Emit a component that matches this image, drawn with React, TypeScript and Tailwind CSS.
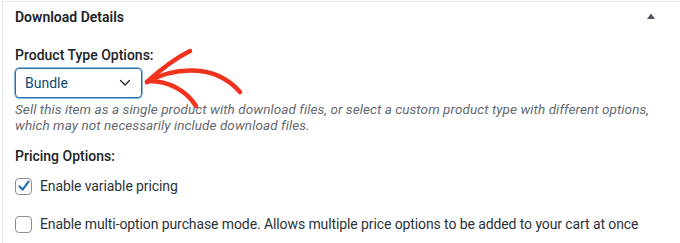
import React from "react";

// ── Pannello "Download Details" ─────────────────────────────────────────────

const font = "font-['Roboto','Liberation_Sans',sans-serif]";

function Checkbox({ checked }: { checked?: boolean }) {
  return (
    <span className="relative flex h-[17px] w-[17px] shrink-0 items-center justify-center rounded-[4px] border border-[#8c8f94] bg-white">
      {checked && (
        <svg width="16" height="16" viewBox="0 0 16 16" className="absolute">
          <path d="M3.6 8.4 L6.6 11.6 L12.6 3.6" fill="none" stroke="#2271b1" strokeWidth="2.2" strokeLinecap="round" strokeLinejoin="round" />
        </svg>
      )}
    </span>
  );
}

function RedArrow() {
  return (
    <svg className="pointer-events-none absolute left-0 top-0" width="680" height="243" viewBox="0 0 680 243">
      <g fill="none" stroke="#f1321d" strokeWidth="4.5" strokeLinecap="round" strokeLinejoin="round">
        <path d="M147 82 C 160 70, 176 58, 190 51" />
        <path d="M147 82 C 172 68, 214 62, 240 92" />
        <path d="M149 81 C 168 81, 186 90, 196 106" />
      </g>
    </svg>
  );
}

export default function App() {
  return (
    <div className={`relative h-[243px] w-[680px] overflow-hidden bg-white pl-[2px] pt-[1px] ${font}`}>
      <div className="h-full border-l border-t border-[#e2e4e7]">
        {/* Header */}
        <div className="flex items-center justify-between px-[12px] pt-[5px]">
          <h2 className="text-[14px] font-semibold leading-[20px] text-[#1d2327]">Download Details</h2>
          <svg width="10" height="8" viewBox="0 0 10 8" className="mr-[12px] mt-[-2px]">
            <path d="M1 7 L5 1.5 L9 7 Z" fill="#50575e" />
          </svg>
        </div>

        {/* Body */}
        <div className="whitespace-nowrap px-[12px] pt-[18px]">
          <p className="text-[14px] font-medium leading-[20px] text-[#1d2327]">Product Type Options:</p>

          <div className="mt-[3px] flex h-[30px] w-[127px] items-center justify-between rounded-[4px] border border-[#2271b1] pl-[9px] pr-[10px] shadow-[0_0_0_0.5px_#2271b1]">
            <span className="text-[14px] leading-[20px] text-[#0a4b78]">Bundle</span>
            <svg width="12" height="8" viewBox="0 0 12 8">
              <path d="M1.5 1.5 L6 6 L10.5 1.5" fill="none" stroke="#1d2327" strokeWidth="1.3" strokeLinecap="round" strokeLinejoin="round" />
            </svg>
          </div>

          <p className="mt-[3px] text-[13.5px] italic leading-[16px] tracking-[0.08px] text-[#646970]">
            Sell this item as a single product with download files, or select a custom product type with different options,
            <br />
            which may not necessarily include download files.
          </p>

          <p className="mt-[13px] text-[14px] font-medium leading-[20px] text-[#1d2327]">Pricing Options:</p>

          <label className="mt-[10px] flex items-center gap-[8px] text-[14px] leading-[20px] tracking-[-0.1px] text-[#2c3338]">
            <Checkbox checked />
            <span>Enable variable pricing</span>
          </label>

          <label className="mt-[18px] flex items-center gap-[8px] text-[14px] leading-[20px] tracking-[-0.1px] text-[#2c3338]">
            <Checkbox />
            <span>Enable multi-option purchase mode. Allows multiple price options to be added to your cart at once</span>
          </label>
        </div>
      </div>
      <RedArrow />
    </div>
  );
}
